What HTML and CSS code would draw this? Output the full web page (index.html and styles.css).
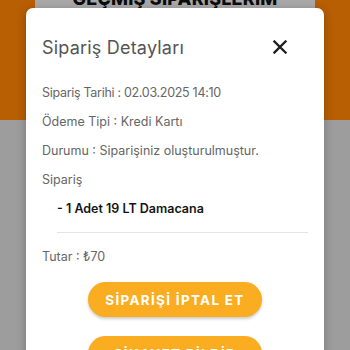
FILE: index.html
```html
<!DOCTYPE html>
<html lang="tr">
<head>
<meta charset="utf-8">
<link rel="stylesheet" href="styles.css">
</head>
<body>
<div class="page">
  <div class="header-band">
    <div class="bg-card"><span class="bg-title">GEÇMİŞ SİPARİŞLERİM</span></div>
  </div>
</div>
<div class="modal">
  <div class="modal-head">
    <span class="modal-title">Sipariş Detayları</span>
    <svg class="close" width="14" height="14" viewBox="0 0 14 14"><path d="M1.5 1.5 L12.5 12.5 M12.5 1.5 L1.5 12.5" stroke="#1e1e1e" stroke-width="2.3" stroke-linecap="square"/></svg>
  </div>
  <div class="rows">
    <div class="row">Sipariş Tarihi : 02.03.2025 14:10</div>
    <div class="row">Ödeme Tipi : Kredi Kartı</div>
    <div class="row">Durumu : Siparişiniz oluşturulmuştur.</div>
    <div class="row">Sipariş</div>
    <div class="row item">- 1 Adet 19 LT Damacana</div>
  </div>
  <div class="divider"></div>
  <div class="row total">Tutar : ₺70</div>
  <div class="actions">
    <div class="btn">SİPARİŞİ İPTAL ET</div>
    <div class="btn">ŞİKAYET BİLDİR</div>
  </div>
</div>
</body>
</html>
```
FILE: styles.css
```css
html, body {
  margin: 0;
  padding: 0;
  width: 350px;
  height: 350px;
  overflow: hidden;
  font-family: Inter, "Noto Sans", sans-serif;
}
.page {
  width: 350px;
  height: 350px;
  background: #9d9d9d;
}
.header-band {
  height: 120px;
  background: #b85e03;
  display: flex;
  justify-content: center;
}
.bg-card {
  width: 280px;
  height: 40px;
  background: #a9a9a9;
  display: flex;
  justify-content: center;
  align-items: flex-start;
  overflow: hidden;
}
.bg-title {
  font-weight: 800;
  font-size: 18px;
  color: #0c0c0c;
  margin-top: -12px;
  letter-spacing: 0.2px;
}
.modal {
  position: absolute;
  left: 26px;
  top: 8px;
  width: 266px;
  padding: 28px 16px 40px 16px;
  background: #fff;
  border-radius: 7px;
  box-shadow: 0 2px 10px rgba(0,0,0,0.25);
  height: 400px;
}
.modal-head {
  display: flex;
  align-items: center;
  justify-content: space-between;
  height: 22px;
  padding-right: 21px;
}
.modal-title {
  font-size: 18px;
  color: #555;
  letter-spacing: 0.2px;
}
.close {
  margin-top: -1px;
}
.rows {
  margin-top: 19.5px;
}
.row {
  height: 29px;
  line-height: 29px;
  font-size: 12.5px;
  color: #666;
  white-space: nowrap;
}
.row:first-child {
  letter-spacing: -0.3px;
}
.item {
  padding-left: 15px;
  font-weight: 600;
  color: #141414;
}
.divider {
  margin: 9.5px 0 0 15px;
  height: 1px;
  background: #e4e4e4;
}
.total {
  margin-top: 8.5px;
}
.actions {
  margin-top: 11.5px;
  display: flex;
  flex-direction: column;
  align-items: center;
  gap: 19px;
}
.btn {
  width: 174px;
  height: 35px;
  border-radius: 18px;
  background: #fbad22;
  color: #fff;
  font-weight: 700;
  font-size: 13.5px;
  letter-spacing: 1.3px;
  display: flex;
  align-items: center;
  justify-content: center;
  box-shadow: 0 2px 3px rgba(0,0,0,0.2);
}
```
